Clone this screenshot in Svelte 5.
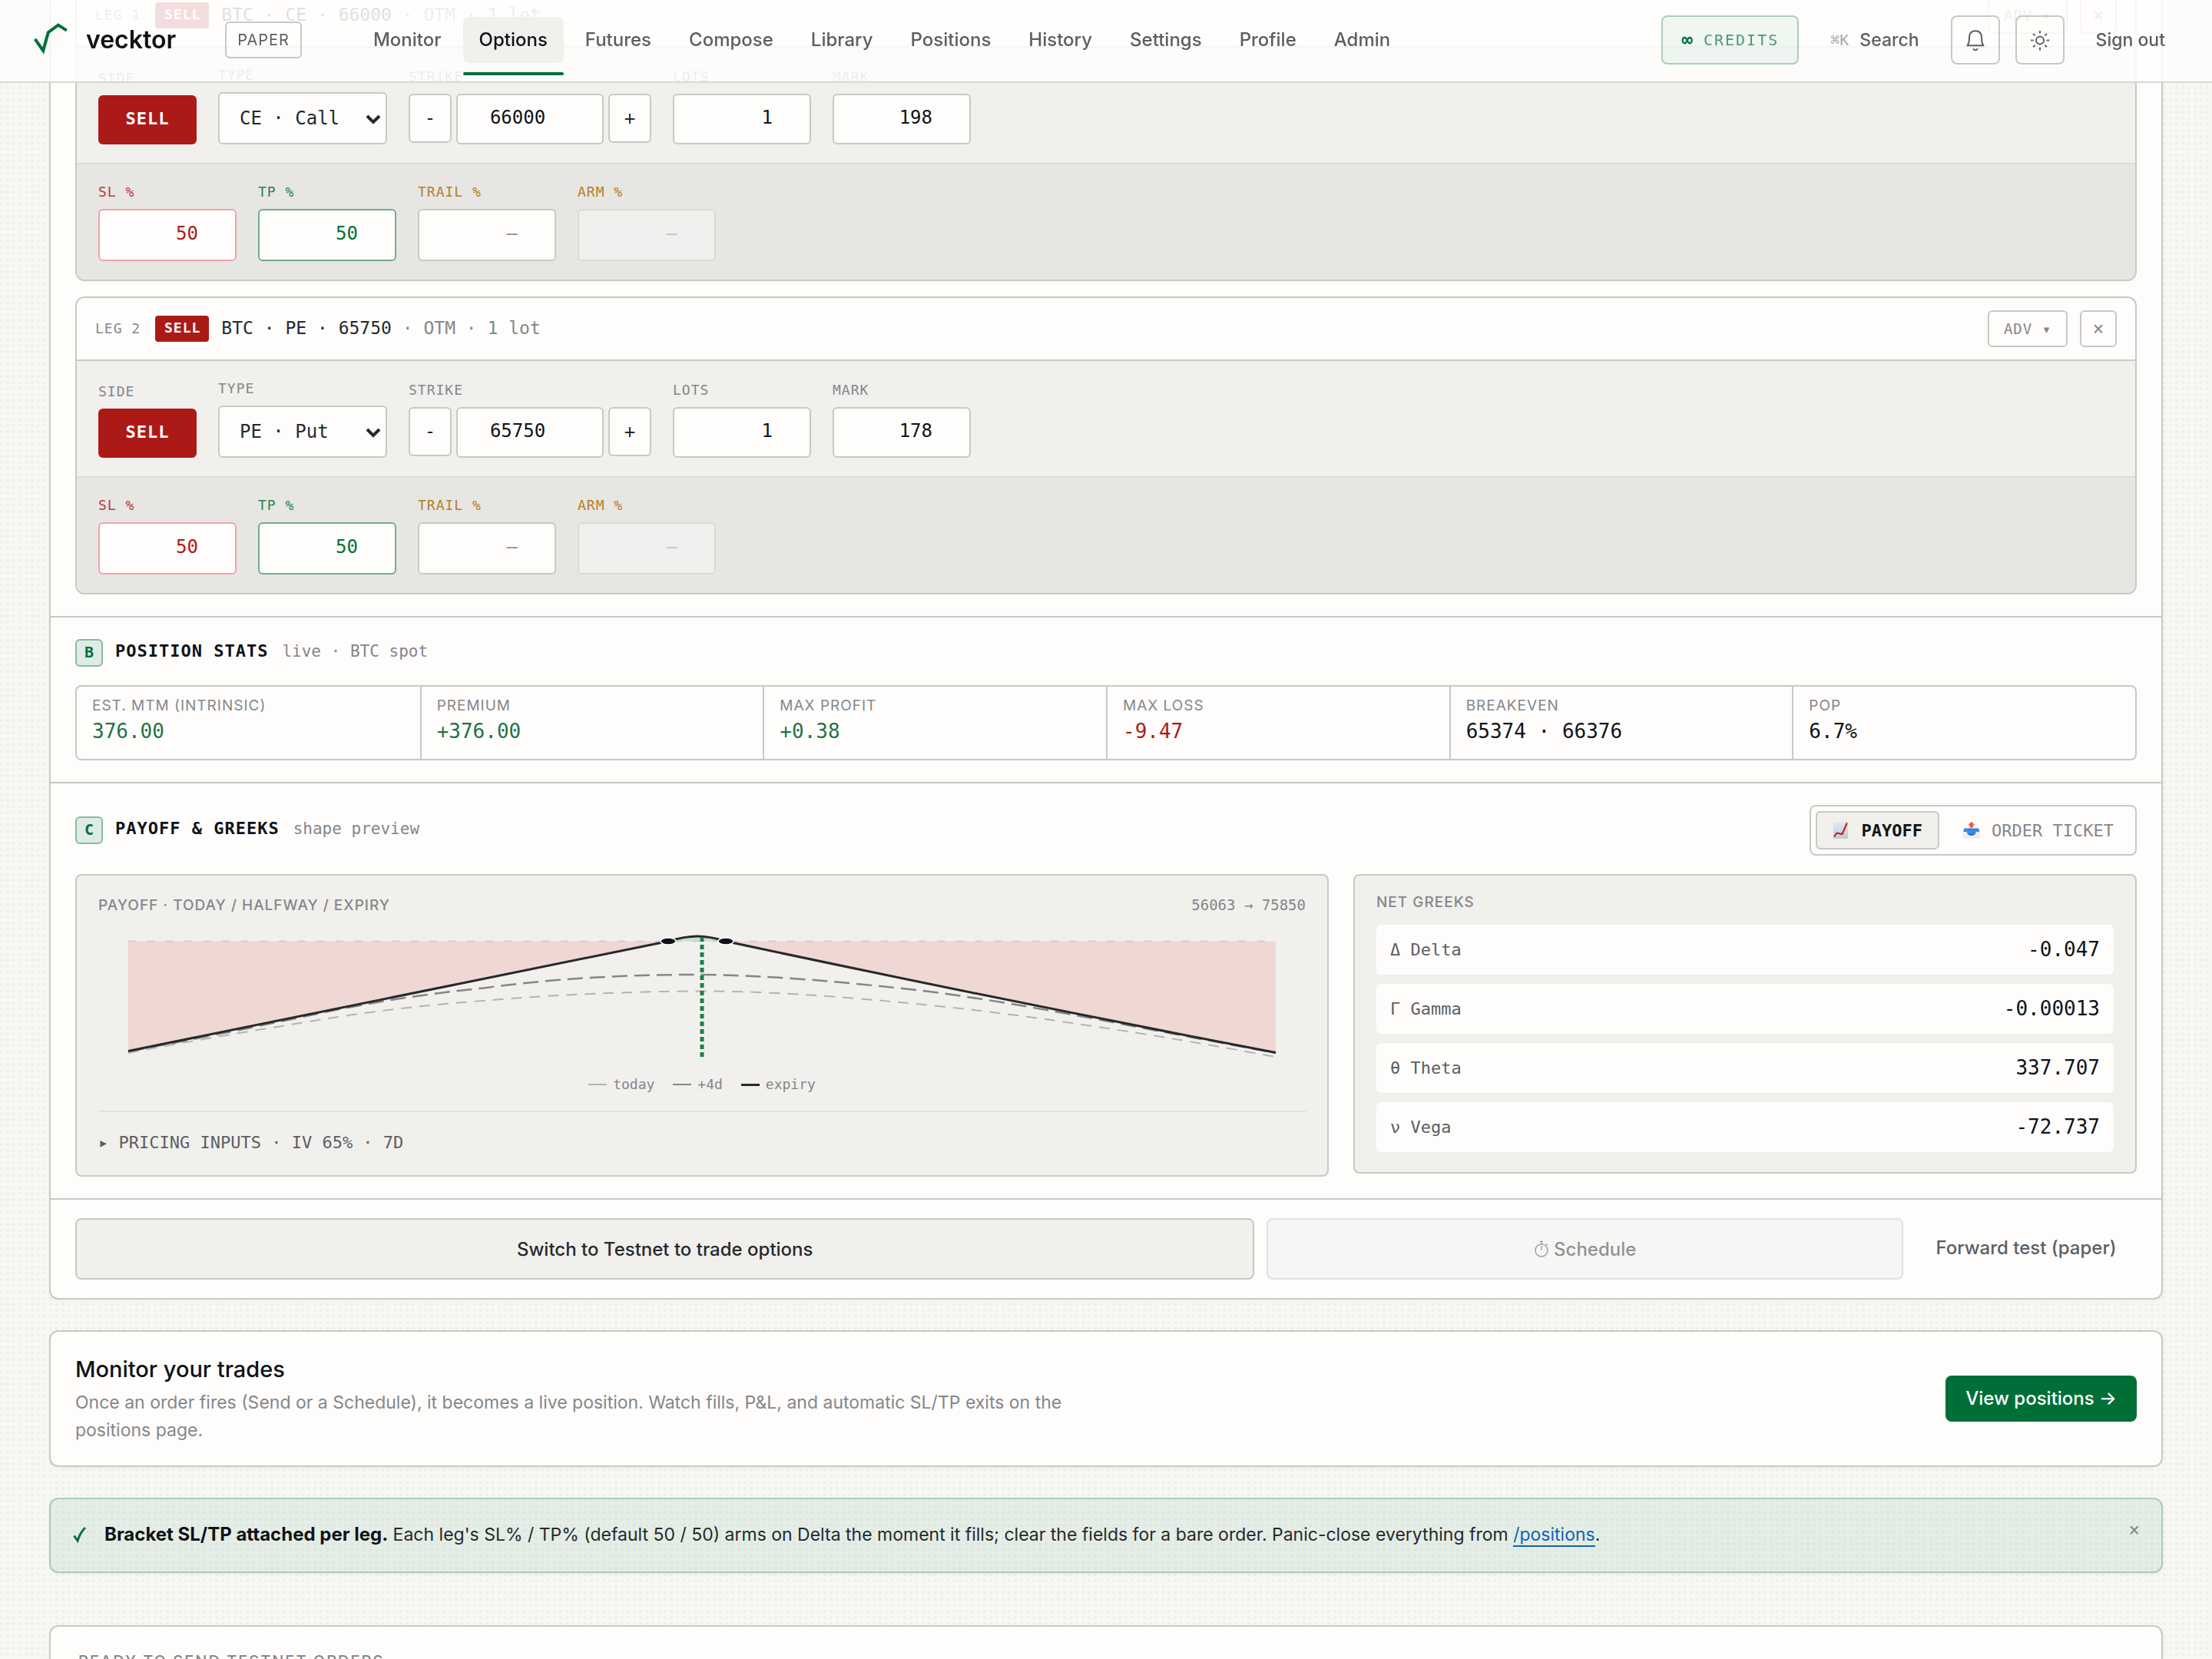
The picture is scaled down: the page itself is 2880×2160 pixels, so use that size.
<script>
	const navItems = [
		'Monitor',
		'Options',
		'Futures',
		'Compose',
		'Library',
		'Positions',
		'History',
		'Settings',
		'Profile',
		'Admin'
	];
	let activePage = 'Options';

	let legs = [
		{ id: 1, side: 'SELL', type: 'CE', strike: 66000, lots: 1, mark: 198, sl: 50, tp: 50 },
		{ id: 2, side: 'SELL', type: 'PE', strike: 65750, lots: 1, mark: 178, sl: 50, tp: 50 }
	];

	const stats = [
		{ label: 'Est. MTM (intrinsic)', value: '376.00', tone: 'up' },
		{ label: 'Premium', value: '+376.00', tone: 'up' },
		{ label: 'Max profit', value: '+0.38', tone: 'up' },
		{ label: 'Max loss', value: '-9.47', tone: 'down' },
		{ label: 'Breakeven', value: '65374 · 66376', tone: '' },
		{ label: 'POP', value: '6.7%', tone: '' }
	];

	const greeks = [
		{ name: 'Δ Delta', value: '-0.047' },
		{ name: 'Γ Gamma', value: '-0.00013' },
		{ name: 'θ Theta', value: '337.707' },
		{ name: 'ν Vega', value: '-72.737' }
	];

	let tab = 'payoff';
	let showNotice = true;

	function stepStrike(leg, amount) {
		leg.strike = Number(leg.strike) + amount;
		legs = legs;
	}

	function toggleSide(leg) {
		leg.side = leg.side === 'SELL' ? 'BUY' : 'SELL';
		legs = legs;
	}

	function removeLeg(leg) {
		legs = legs.filter((l) => l.id !== leg.id);
	}
</script>

<div class="page">
	<header class="topbar">
		<a class="brand" href="#home">
			<svg class="logo" viewBox="0 0 48 48" fill="none" aria-hidden="true">
				<path
					d="M5.6 22.8 L16.2 38 L22.8 14.2 L35.8 4.6 L46.8 11.6"
					stroke="#00703a"
					stroke-width="4"
				/>
			</svg>
			<span>vecktor</span>
		</a>
		<span class="mode">PAPER</span>
		<nav>
			{#each navItems as item}
				<a
					href="#{item.toLowerCase()}"
					class:active={item === activePage}
					on:click={() => (activePage = item)}>{item}</a
				>
			{/each}
		</nav>
		<div class="tools">
			<button class="credits"><b>∞</b>CREDITS</button>
			<button class="ghost search"><kbd>⌘K</kbd>Search</button>
			<button class="icon-btn" aria-label="Notifications">
				<svg viewBox="0 0 32 32" fill="none" stroke="#5b5f63" stroke-width="2">
					<path
						d="M5.5 23.2 H26.5 C24.4 20.8 24 17.5 24 13 C24 7.5 21 4.2 16 4.2 C11 4.2 8 7.5 8 13 C8 17.5 7.6 20.8 5.5 23.2 Z"
						stroke-linejoin="round"
					/>
					<path d="M13.6 27.8 C14.6 29.6 17.4 29.6 18.4 27.8" stroke-linecap="round" />
				</svg>
			</button>
			<button class="icon-btn" aria-label="Theme">
				<svg viewBox="0 0 32 32" fill="none" stroke="#5b5f63" stroke-width="2">
					<circle cx="16" cy="16.5" r="5" />
					<path
						d="M16 4v3.6M16 25.8v3.6M4 16.500h3.6M24.6 16.500h3.6M7.2 8l2.4 2.4M22.4 22.8l2.4 2.4M7.2 25.2l2.4-2.4M22.4 10.4l2.4-2.4"
					/>
				</svg>
			</button>
			<button class="ghost">Sign out</button>
		</div>
	</header>

	<main>
		<section class="card builder">
			<div class="legs">
				{#each legs as leg (leg.id)}
					<article class="leg">
						<div class="leg-head">
							<span class="leg-no">LEG {leg.id}</span>
							<span class="chip">{leg.side}</span>
							<span class="leg-title"
								>BTC · {leg.type} · {leg.strike}{' '}<span class="dim">· OTM · {leg.lots} lot</span
								></span
							>
							<button class="small adv">ADV ▾</button>
							<button class="small close" aria-label="Remove leg" on:click={() => removeLeg(leg)}
								>×</button
							>
						</div>
						<div class="row">
							<div class="field">
								<label for="side-{leg.id}">SIDE</label>
								<button id="side-{leg.id}" class="side" on:click={() => toggleSide(leg)}
									>{leg.side}</button
								>
							</div>
							<div class="field">
								<label for="type-{leg.id}">TYPE</label>
								<div class="select">
									<select id="type-{leg.id}" bind:value={leg.type}>
										<option value="CE">CE · Call</option>
										<option value="PE">PE · Put</option>
									</select>
									<svg viewBox="0 0 20 14" fill="none" aria-hidden="true">
										<path d="M2 3 L10 11 L18 3" stroke="#25292e" stroke-width="4" />
									</svg>
								</div>
							</div>
							<div class="field">
								<label for="strike-{leg.id}">STRIKE</label>
								<div class="stepper">
									<button aria-label="Lower strike" on:click={() => stepStrike(leg, -250)}>-</button>
									<input
										id="strike-{leg.id}"
										class="strike"
										inputmode="numeric"
										bind:value={leg.strike}
									/>
									<button aria-label="Raise strike" on:click={() => stepStrike(leg, 250)}>+</button>
								</div>
							</div>
							<div class="field">
								<label for="lots-{leg.id}">LOTS</label>
								<input id="lots-{leg.id}" inputmode="numeric" bind:value={leg.lots} />
							</div>
							<div class="field">
								<label for="mark-{leg.id}">MARK</label>
								<input id="mark-{leg.id}" inputmode="numeric" bind:value={leg.mark} />
							</div>
						</div>
						<div class="row exits">
							<div class="field sl">
								<label for="sl-{leg.id}">SL %</label>
								<input id="sl-{leg.id}" inputmode="numeric" bind:value={leg.sl} />
							</div>
							<div class="field tp">
								<label for="tp-{leg.id}">TP %</label>
								<input id="tp-{leg.id}" inputmode="numeric" bind:value={leg.tp} />
							</div>
							<div class="field trail">
								<label for="trail-{leg.id}">TRAIL %</label>
								<input id="trail-{leg.id}" inputmode="numeric" placeholder="—" />
							</div>
							<div class="field trail">
								<label for="arm-{leg.id}">ARM %</label>
								<input id="arm-{leg.id}" inputmode="numeric" placeholder="—" disabled />
							</div>
						</div>
					</article>
				{/each}
			</div>

			<div class="section">
				<div class="section-head">
					<span class="badge">B</span>
					<h2>POSITION STATS</h2>
					<span class="hint">live · BTC spot</span>
				</div>
				<dl class="stats">
					{#each stats as s}
						<div>
							<dt>{s.label}</dt>
							<dd class={s.tone}>{s.value}</dd>
						</div>
					{/each}
				</dl>
			</div>

			<div class="section">
				<div class="section-head">
					<span class="badge">C</span>
					<h2>PAYOFF &amp; GREEKS</h2>
					<span class="hint">shape preview</span>
					<div class="tabs">
						<button class:active={tab === 'payoff'} on:click={() => (tab = 'payoff')}>
							<svg viewBox="0 0 24 24" aria-hidden="true">
								<defs>
									<linearGradient id="paper" x1="0" y1="0" x2="0" y2="1">
										<stop offset="0" stop-color="#dfe9f1" />
										<stop offset="1" stop-color="#bfcbd6" />
									</linearGradient>
								</defs>
								<rect x="1" y="1" width="19" height="22" fill="url(#paper)" />
								<path
									d="M2 20.500 L5.500 15.500 L12.500 17 L18.800 2.500"
									fill="none"
									stroke="#c8141c"
									stroke-width="2"
								/>
							</svg>
							PAYOFF
						</button>
						<button class:active={tab === 'ticket'} on:click={() => (tab = 'ticket')}>
							<svg viewBox="0 0 24 24" aria-hidden="true">
								<defs>
									<linearGradient id="tray" x1="0" y1="0" x2="0" y2="1">
										<stop offset="0" stop-color="#2c7bd0" />
										<stop offset="0.5" stop-color="#3f93ea" />
										<stop offset="1" stop-color="#1c67bb" />
									</linearGradient>
								</defs>
								<path d="M0.500 14 h22.500 v8 q0 1 -1 1 h-20.500 q-1 0 -1 -1 z" fill="#efeeec" />
								<path
									d="M2.500 9.500 h18.500 l1.500 4.500 h-4.500 q-1 5 -6.200 5 q-5.200 0 -6.200 -5 h-4.500 z"
									fill="url(#tray)"
								/>
								<path d="M11.800 0.800 L16.200 5.200 H14 V8.500 H9.600 V5.200 H7.400 Z" fill="#ff4d42" />
							</svg>
							ORDER TICKET
						</button>
					</div>
				</div>

				<div class="panels">
					<div class="panel">
						<div class="panel-head">
							<h3>PAYOFF · TODAY / HALFWAY / EXPIRY</h3>
							<span class="range">56063 → 75850</span>
						</div>
						<svg
							class="chart"
							viewBox="0 0 1572 180"
							preserveAspectRatio="none"
							fill="none"
							role="img"
							aria-label="Payoff curves"
						>
							<path
								d="M39 17.5 H742 L39 160.5 Z M817 17.5 H1533 V162.5 Q1170 93 817 17.5 Z"
								fill="#efd7d4"
							/>
							<path d="M742 17.5 Q764 11 780 11 Q796 11 817 17.5 Z" fill="#cdded2" />
							<path d="M39 17.5 H1533" stroke="#c9c8c6" stroke-width="1.5" stroke-dasharray="10 14.5" />
							<path
								d="M39 163 C105 150 177 138 269 123 C345 110 418 101 501.5 95 C580 88 690 82.5 789 82.5 C900 82.5 1030 95 1139 106.8 C1240 119 1330 133 1415 147 C1455 154 1495 161 1533 168"
								stroke="#b3b3b1"
								stroke-width="2"
								stroke-dasharray="14 10"
							/>
							<path
								d="M39 161 C130 144 215 127 299 109 C365 95.5 430 85.5 501.5 78.5 C590 66 690 61 771 61 C870 61 980 71 1090 84 C1200 99 1300 119 1366 131.6 C1430 144 1480 153 1533 163"
								stroke="#848684"
								stroke-width="2.5"
								stroke-dasharray="20 9"
							/>
							<path
								d="M39 160.5 L742 17.5 Q764 11 780 11 Q796 11 817 17.5 Q1170 93 1533 162.5"
								stroke="#25292d"
								stroke-width="3"
							/>
							<path d="M786 12 V168" stroke="#1b8049" stroke-width="5" stroke-dasharray="6 4" />
							<ellipse cx="742" cy="17.5" rx="10" ry="4.5" fill="#0e1216" stroke="#fff" stroke-width="1.5" />
							<ellipse cx="817" cy="17.5" rx="10" ry="4.5" fill="#0e1216" stroke="#fff" stroke-width="1.5" />
						</svg>
						<ul class="legend">
							<li class="today">today</li>
							<li class="half">+4d</li>
							<li class="expiry">expiry</li>
						</ul>
						<details>
							<summary>▸ PRICING INPUTS · IV 65% · 7D</summary>
						</details>
					</div>

					<div class="panel">
						<h3>NET GREEKS</h3>
						<dl class="greeks">
							{#each greeks as g}
								<div>
									<dt>{g.name}</dt>
									<dd>{g.value}</dd>
								</div>
							{/each}
						</dl>
					</div>
				</div>
			</div>

			<div class="actions">
				<button class="primary">Switch to Testnet to trade options</button>
				<button class="schedule" disabled>
					<svg viewBox="0 0 20 24" fill="none" stroke="#45484b" aria-hidden="true">
						<circle cx="10" cy="14" r="8" stroke-width="1.5" />
						<path d="M10 8 V14 M8 2.5 h4 M10 3 v3 M16 5.5 l2 2" stroke-width="1.5" />
					</svg>
					Schedule
				</button>
				<button class="forward">Forward test (paper)</button>
			</div>
		</section>

		<section class="card monitor">
			<div>
				<h2>Monitor your trades</h2>
				<p>
					Once an order fires (Send or a Schedule), it becomes a live position. Watch fills, P&amp;L,
					and automatic SL/TP exits on the positions page.
				</p>
			</div>
			<a class="cta" href="#positions">View positions →</a>
		</section>

		{#if showNotice}
			<section class="notice">
				<svg viewBox="0 0 20 24" fill="none" aria-hidden="true">
					<path d="M2.5 13.5 L7 20 Q10.5 9 17 3" stroke="#00703a" stroke-width="3" />
				</svg>
				<p>
					<strong>Bracket SL/TP attached per leg.</strong> Each leg's SL% / TP% (default 50 / 50) arms
					on Delta the moment it fills; clear the fields for a bare order. Panic-close everything from
					<a href="#positions">/positions</a>.
				</p>
				<button aria-label="Dismiss" on:click={() => (showNotice = false)}>×</button>
			</section>
		{/if}

		<section class="card ready">
			<h3>READY TO SEND TESTNET ORDERS</h3>
		</section>
	</main>
</div>

<style>
	:global(body) {
		background: #f7f7f4;
	}

	.page {
		--sans: Inter, 'Liberation Sans', sans-serif;
		--mono: 'DejaVu Sans Mono', 'Liberation Mono', monospace;
		--line: #c9c8c5;
		--ink: #0f1317;
		--body: #25292d;
		--mid: #5b5f63;
		--dim: #84878a;
		--green: #00703a;
		--red: #ac1a18;
		height: 100vh;
		overflow: hidden;
		font-family: var(--sans);
		font-size: 24px;
		color: var(--body);
		background: radial-gradient(circle at 2px 2px, #eff0ec 2px, transparent 2px) 0 0 / 8px 8px #f7f8f4;
	}

	.page *,
	.page *::before {
		box-sizing: border-box;
	}

	h2,
	h3,
	p,
	dl,
	dd,
	ul {
		margin: 0;
		padding: 0;
	}

	button,
	input,
	select {
		margin: 0;
		font-family: var(--mono);
		color: inherit;
	}

	a {
		color: inherit;
		text-decoration: none;
	}

	/* top bar */
	.topbar {
		position: fixed;
		top: 0;
		left: 0;
		right: 0;
		z-index: 10;
		display: flex;
		align-items: center;
		padding: 20px 40px 22px;
		background: rgba(255, 254, 253, 0.86);
		border-bottom: 2px solid rgba(200, 199, 196, 0.7);
	}

	.brand {
		display: flex;
		align-items: center;
		gap: 24px;
		font-size: 32px;
		font-weight: 600;
		line-height: 40px;
		color: var(--ink);
	}

	.logo {
		width: 48px;
		height: 48px;
		filter: drop-shadow(0 0 12px rgba(0, 112, 58, 0.12));
	}

	.mode {
		margin-left: 64px;
		padding: 0 14px;
		border: 2px solid var(--line);
		border-radius: 6px;
		font-size: 20px;
		letter-spacing: 1px;
		line-height: 44px;
		color: var(--mid);
	}

	nav {
		display: flex;
		gap: 7px;
		margin-left: 72px;
	}

	nav a {
		position: relative;
		padding: 0 21px;
		border-radius: 8px;
		font-size: 24px;
		font-weight: 500;
		line-height: 60px;
		color: var(--mid);
	}

	nav a.active {
		background: #f1f0ed;
		color: var(--ink);
	}

	nav a.active::after {
		content: '';
		position: absolute;
		left: 0;
		right: 0;
		bottom: -16px;
		height: 4px;
		border-radius: 2px;
		background: var(--green);
	}

	.tools {
		display: flex;
		gap: 20px;
		margin-left: auto;
	}

	.tools button {
		display: flex;
		align-items: center;
		justify-content: center;
		height: 64px;
		border-radius: 8px;
		background: none;
	}

	.tools .credits {
		gap: 14px;
		padding: 0 24px;
		border: 2px solid #a9d0bb;
		background: rgba(0, 112, 58, 0.06);
		font-size: 20px;
		letter-spacing: 2px;
		color: #4a9a70;
	}

	.credits b {
		font-size: 24px;
		letter-spacing: 0;
		color: var(--green);
	}

	.tools .ghost {
		padding: 0 21px;
		border: 0;
		font-family: var(--sans);
		font-size: 23px;
		font-weight: 500;
		color: var(--mid);
	}

	.tools .search {
		gap: 14px;
	}

	kbd {
		font-family: var(--mono);
		font-size: 20px;
		font-weight: 400;
		color: #a3a5a6;
	}

	.tools .icon-btn {
		width: 64px;
		padding: 0;
		border: 2px solid var(--line);
	}

	.icon-btn svg {
		width: 32px;
		height: 32px;
	}

	/* the page is scrolled part-way into the builder */
	main {
		display: flex;
		flex-direction: column;
		gap: 40px;
		margin-top: -52px;
		padding: 0 64px;
	}

	.card {
		flex: none;
		background: #fefdfc;
		border: 2px solid var(--line);
		border-radius: 12px;
		box-shadow: 0 2px 4px rgba(0, 0, 0, 0.04);
	}

	.legs {
		display: flex;
		flex-direction: column;
		gap: 20px;
		padding: 28px 32px;
	}

	.leg {
		overflow: hidden;
		border: 2px solid var(--line);
		border-radius: 12px;
	}

	.leg-head {
		display: flex;
		align-items: center;
		gap: 16px;
		padding: 16px 24px;
		border-bottom: 2px solid var(--line);
		font-family: var(--mono);
	}

	.leg-no {
		min-width: 62px;
		padding-bottom: 2px;
		font-size: 18px;
		letter-spacing: 1px;
		color: var(--dim);
	}

	.chip {
		padding: 0 11px 2px 12px;
		border-radius: 4px;
		background: var(--red);
		font-size: 18px;
		font-weight: 700;
		letter-spacing: 1px;
		line-height: 32px;
		color: #fff;
	}

	.leg-title {
		flex: 1;
		padding-bottom: 2px;
		font-size: 23px;
	}

	.dim {
		color: var(--dim);
	}

	.small {
		height: 48px;
		border: 2px solid var(--line);
		border-radius: 6px;
		background: none;
		color: var(--dim);
	}

	.adv {
		width: 104px;
		padding: 0;
		font-size: 19px;
		letter-spacing: 1px;
	}

	.close {
		width: 48px;
		padding: 0;
		font-size: 24px;
	}

	.row {
		display: flex;
		align-items: flex-end;
		gap: 28px;
		padding: 24px 28px;
		background: #f1f0ed;
	}

	.exits {
		border-top: 2px solid #dcdbd8;
		background: #e7e6e3;
	}

	.field {
		display: flex;
		flex-direction: column;
		gap: 10px;
	}

	.field label {
		font-family: var(--mono);
		font-size: 18px;
		letter-spacing: 1px;
		line-height: 24px;
		color: var(--dim);
	}

	.field input {
		width: 180px;
		height: 66px;
		padding: 0 48px 4px 16px;
		border: 2px solid var(--line);
		border-radius: 6px;
		background: #fefdfc;
		font-size: 24px;
		text-align: right;
		color: var(--ink);
	}

	.exits .field input {
		height: 68px;
	}

	.field input::placeholder {
		color: #8b8d8e;
		opacity: 1;
	}

	.field input:disabled {
		opacity: 0.4;
	}

	.field .strike {
		width: 192px;
		text-align: center;
	}

	.side {
		width: 128px;
		height: 64px;
		padding: 0 0 4px;
		border: 0;
		border-radius: 6px;
		background: var(--red);
		font-size: 22px;
		font-weight: 700;
		letter-spacing: 1px;
		color: #fff;
	}

	.select {
		position: relative;
	}

	.select select {
		width: 220px;
		height: 68px;
		padding: 0 40px 0 26px;
		border: 2px solid var(--line);
		border-radius: 6px;
		appearance: none;
		background: #fefdfc;
		font-size: 24px;
	}

	.select svg {
		position: absolute;
		top: 28px;
		right: 8px;
		width: 20px;
		height: 14px;
		pointer-events: none;
	}

	.stepper {
		display: flex;
		gap: 6px;
	}

	.stepper button {
		width: 56px;
		height: 64px;
		padding: 0;
		border: 2px solid var(--line);
		border-radius: 6px;
		background: #fefdfc;
		font-size: 24px;
	}

	.sl label {
		color: #b83a38;
	}

	.field.sl input {
		border-color: #f3a3a1;
		color: var(--red);
	}

	.tp label {
		color: #2b8354;
	}

	.field.tp input {
		border-color: #6fae8d;
		color: var(--green);
	}

	.trail label {
		color: #b37f26;
	}

	/* stats and payoff */
	.section {
		padding: 28px 32px;
		border-top: 2px solid var(--line);
	}

	.section-head {
		display: flex;
		align-items: center;
		font-family: var(--mono);
	}

	.badge {
		width: 36px;
		margin-right: 16px;
		padding-bottom: 2px;
		border: 2px solid #84bd9f;
		border-radius: 6px;
		background: #e0ebe4;
		font-size: 20px;
		font-weight: 700;
		line-height: 30px;
		text-align: center;
		color: var(--green);
	}

	.section-head h2 {
		margin-right: 18px;
		padding-bottom: 4px;
		font-size: 22px;
		font-weight: 700;
		letter-spacing: 1px;
		line-height: 32px;
		color: var(--ink);
	}

	.hint {
		padding-bottom: 4px;
		font-size: 21px;
		line-height: 32px;
		color: var(--dim);
	}

	.stats {
		display: grid;
		grid-template-columns: repeat(6, 1fr);
		margin-top: 24px;
		border: 2px solid var(--line);
		border-radius: 8px;
	}

	.stats div {
		padding: 10px 20px 18px;
	}

	.stats div + div {
		border-left: 2px solid var(--line);
	}

	.stats dt {
		font-size: 19px;
		letter-spacing: 1px;
		line-height: 30px;
		text-transform: uppercase;
		color: var(--dim);
	}

	.stats dd {
		font-family: var(--mono);
		font-size: 26px;
		line-height: 36px;
		color: var(--ink);
	}

	.stats dd.up {
		color: #1f7345;
	}

	.stats dd.down {
		color: var(--red);
	}

	.tabs {
		display: flex;
		gap: 8px;
		margin-left: auto;
		padding: 6px;
		border: 2px solid var(--line);
		border-radius: 8px;
	}

	.tabs button {
		display: flex;
		align-items: center;
		gap: 14px;
		height: 50px;
		padding: 0 20px;
		border: 2px solid transparent;
		border-radius: 6px;
		background: none;
		font-size: 22px;
		color: var(--dim);
	}

	.tabs button.active {
		border-color: var(--line);
		background: #f1f0ed;
		font-weight: 700;
		color: var(--ink);
	}

	.tabs svg {
		width: 24px;
		height: 24px;
	}

	.panels {
		display: grid;
		grid-template-columns: 8fr 5fr;
		align-items: start;
		gap: 32px;
		margin-top: 24px;
	}

	.panel {
		padding: 22px 28px 26px;
		border: 2px solid var(--line);
		border-radius: 8px;
		background: #f1f0ed;
	}

	.panel-head {
		display: flex;
		justify-content: space-between;
		padding-top: 4px;
	}

	h3 {
		font-size: 19px;
		font-weight: 500;
		letter-spacing: 1px;
		line-height: 26px;
		color: var(--dim);
	}

	.range {
		font-family: var(--mono);
		font-size: 19px;
		line-height: 24px;
		color: var(--dim);
	}

	.chart {
		display: block;
		width: 100%;
		height: 180px;
		margin-top: 16px;
	}

	.legend {
		display: flex;
		justify-content: center;
		gap: 24px;
		margin: 10px 0 20px;
		list-style: none;
		font-family: var(--mono);
		font-size: 18px;
		line-height: 28px;
		color: var(--dim);
	}

	.legend li {
		display: flex;
		align-items: center;
		gap: 8px;
	}

	.legend li::before {
		content: '';
		width: 24px;
		height: 2px;
		background: #b3b3b1;
	}

	.legend .half::before {
		background: #848684;
	}

	.legend .expiry::before {
		height: 3px;
		background: var(--body);
	}

	details {
		padding: 26px 0 2px;
		border-top: 2px solid #e2e1de;
	}

	summary {
		list-style: none;
		font-family: var(--mono);
		font-size: 22px;
		line-height: 28px;
		color: var(--mid);
	}

	.greeks {
		display: flex;
		flex-direction: column;
		gap: 12px;
		margin-top: 16px;
	}

	.greeks div {
		display: flex;
		justify-content: space-between;
		padding: 0 18px;
		border-radius: 6px;
		background: #fefdfc;
		font-family: var(--mono);
		line-height: 65px;
	}

	.greeks dt {
		font-size: 22px;
		color: var(--mid);
	}

	.greeks dd {
		font-size: 26px;
		color: var(--ink);
	}

	.actions {
		display: flex;
		gap: 16px;
		padding: 24px 32px;
		border-top: 2px solid var(--line);
	}

	.actions button {
		height: 80px;
		padding: 0;
		border: 2px solid var(--line);
		border-radius: 8px;
		background: #f1f0ed;
		font-family: var(--sans);
		font-size: 24px;
		font-weight: 500;
	}

	.actions .primary {
		flex: 13;
	}

	.actions .schedule {
		display: flex;
		flex: 7;
		align-items: center;
		justify-content: center;
		gap: 6px;
		opacity: 0.5;
	}

	.schedule svg {
		width: 20px;
		height: 24px;
	}

	.actions .forward {
		width: 288px;
		padding: 0 0 4px;
		border: 0;
		background: none;
		color: var(--mid);
	}

	/* cards below the builder */
	.monitor {
		display: flex;
		align-items: center;
		justify-content: space-between;
		padding: 28px 32px;
	}

	.monitor h2 {
		font-size: 29px;
		font-weight: 500;
		line-height: 42px;
		color: var(--ink);
	}

	.monitor p {
		max-width: 1300px;
		margin-top: 4px;
		font-size: 23px;
		line-height: 36px;
		color: var(--dim);
	}

	.cta {
		padding: 0 26px;
		border-radius: 8px;
		background: #006f37;
		font-weight: 500;
		line-height: 60px;
		color: #fff;
	}

	.notice {
		display: flex;
		gap: 22px;
		padding: 28px 22px 30px 28px;
		border: 2px solid #a5cdb8;
		border-radius: 12px;
		background: rgba(0, 112, 58, 0.07);
		box-shadow: 0 2px 4px rgba(0, 0, 0, 0.04);
	}

	.notice svg {
		width: 20px;
		height: 24px;
		margin-top: 6px;
	}

	.notice p {
		flex: 1;
		font-size: 23px;
		line-height: 36px;
	}

	.notice strong {
		font-size: 24px;
		font-weight: 700;
		color: var(--ink);
	}

	.notice p a {
		border-bottom: 2px solid #0f62b4;
		color: #0f62b4;
	}

	.notice button {
		height: 24px;
		padding: 0 6px;
		border: 0;
		background: none;
		font-size: 24px;
		line-height: 24px;
		color: var(--dim);
	}

	.ready {
		margin-top: 28px;
		padding: 32px 36px;
	}

	.ready h3 {
		font-size: 20px;
		letter-spacing: 2px;
	}
</style>
